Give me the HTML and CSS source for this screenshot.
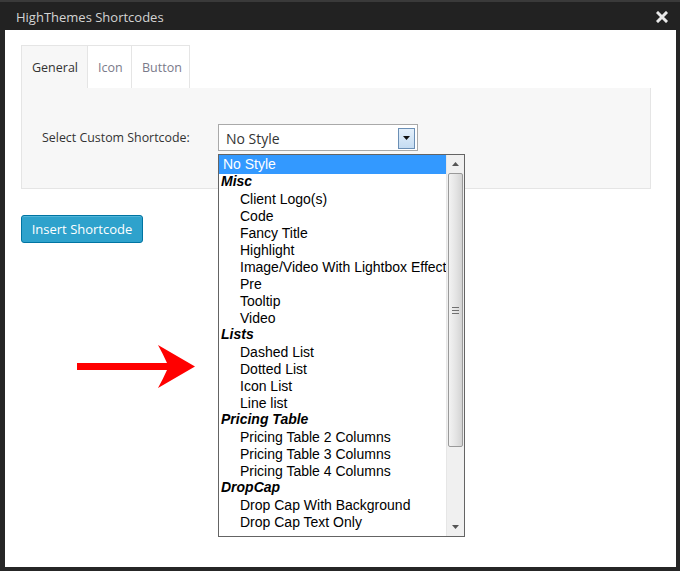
FILE: index.html
```html
<!DOCTYPE html>
<html>
<head>
<meta charset="utf-8">
<link rel="stylesheet" href="styles.css">
</head>
<body>
<div class="dialog">
  <div class="titlebar">
    <span class="title">HighThemes Shortcodes</span>
    <svg class="close" width="12" height="12" viewBox="0 0 12 12"><path d="M2 2 L10 10 M10 2 L2 10" stroke="#e8e8e8" stroke-width="3" stroke-linecap="square"/></svg>
  </div>
  <div class="content">
    <div class="tabs">
      <div class="tab active">General</div>
      <div class="tab tab-icon">Icon</div>
      <div class="tab tab-button">Button</div>
    </div>
    <div class="panel">
      <label class="label">Select Custom Shortcode:</label>
      <div class="select">
        <span class="select-text">No Style</span>
        <span class="select-btn"><svg width="7" height="4" viewBox="0 0 7 4"><path d="M0 0 H7 L3.5 4 Z" fill="#111"/></svg></span>
      </div>
    </div>
    <button class="insert">Insert Shortcode</button>
  </div>

  <div class="listbox">
    <div class="options">
      <div class="opt sel">No Style</div>
      <div class="grp">Misc</div>
      <div class="opt">Client Logo(s)</div>
      <div class="opt">Code</div>
      <div class="opt">Fancy Title</div>
      <div class="opt">Highlight</div>
      <div class="opt">Image/Video With Lightbox Effect</div>
      <div class="opt">Pre</div>
      <div class="opt">Tooltip</div>
      <div class="opt">Video</div>
      <div class="grp">Lists</div>
      <div class="opt">Dashed List</div>
      <div class="opt">Dotted List</div>
      <div class="opt">Icon List</div>
      <div class="opt">Line list</div>
      <div class="grp">Pricing Table</div>
      <div class="opt">Pricing Table 2 Columns</div>
      <div class="opt">Pricing Table 3 Columns</div>
      <div class="opt">Pricing Table 4 Columns</div>
      <div class="grp">DropCap</div>
      <div class="opt">Drop Cap With Background</div>
      <div class="opt">Drop Cap Text Only</div>
    </div>
    <div class="scrollbar">
      <div class="sb-arrow"><svg width="7" height="4" viewBox="0 0 7 4"><path d="M0 4 H7 L3.5 0 Z" fill="#555"/></svg></div>
      <div class="sb-thumb"><span class="grip"></span></div>
      <div class="sb-track"></div>
      <div class="sb-arrow"><svg width="7" height="4" viewBox="0 0 7 4"><path d="M0 0 H7 L3.5 4 Z" fill="#555"/></svg></div>
    </div>
  </div>

  <svg class="arrow" width="118" height="44" viewBox="0 0 118 44">
    <path d="M0 18 L90 18 Q86 9 81 0 L118 21.5 L81 43 Q86 34 90 25 L0 25 Z" fill="#ff0000"/>
  </svg>
</div>
</body>
</html>
```
FILE: styles.css
```css
html, body {
  margin: 0;
  padding: 0;
}
body {
  width: 680px;
  height: 571px;
  background: #262626;
  overflow: hidden;
}
.dialog {
  position: relative;
  width: 680px;
  height: 571px;
  border-top: 2px solid #3a3a3a;
  box-sizing: border-box;
}
.titlebar {
  height: 28px;
  background: #222;
  display: flex;
  align-items: center;
  justify-content: space-between;
  padding: 1px 12px 0 16px;
  box-sizing: border-box;
}
.title {
  font-family: "Open Sans", sans-serif;
  font-size: 13px;
  color: #d4d4d4;
}
.close {
  display: block;
}
.content {
  margin: 0 4px 0 5px;
  height: 537px;
  background: #fff;
  padding: 15px 25px 0 16px;
  box-sizing: border-box;
  font-family: "Open Sans", sans-serif;
}
.tabs {
  display: flex;
  height: 43px;
}
.tab {
  box-sizing: border-box;
  height: 43px;
  border: 1px solid #e5e5e5;
  border-left: none;
  border-bottom: none;
  background: #fff;
  font-size: 12.5px;
  color: #7a7a8a;
  display: flex;
  align-items: center;
  padding: 0 0 0 10px;
  white-space: nowrap;
}
.tab.active {
  background: #f7f7f7;
  border-left: 1px solid #e5e5e5;
  color: #333;
  width: 67px;
}
.tab-icon {
  width: 44px;
}
.tab-button {
  width: 58px;
}
.panel {
  height: 101px;
  box-sizing: border-box;
  background: #f7f7f7;
  border: 1px solid #e5e5e5;
  border-top: none;
  display: flex;
  align-items: flex-start;
  padding: 36px 0 0 20px;
}
.label {
  font-size: 12.4px;
  color: #333;
  width: 176px;
  line-height: 27px;
}
.select {
  width: 200px;
  height: 27px;
  box-sizing: border-box;
  background: #fff;
  border: 1px solid #a9a9a9;
  display: flex;
  align-items: center;
  justify-content: space-between;
  padding: 1px 2px 0 7px;
}
.select-text {
  font-size: 14px;
  color: #333;
}
.select-btn {
  width: 17px;
  height: 21px;
  box-sizing: border-box;
  border: 1px solid #6b8fb5;
  background: linear-gradient(#e4f0fb, #c5dcf2);
  display: flex;
  align-items: center;
  justify-content: center;
}
.insert {
  margin-top: 26px;
  width: 122px;
  height: 28px;
  background: #2ea2cc;
  border: 1px solid #0074a2;
  border-radius: 3px;
  color: #fff;
  font-family: "Open Sans", sans-serif;
  font-size: 13px;
  padding: 0;
  box-shadow: inset 0 1px 0 rgba(120, 200, 230, 0.5);
}
.listbox {
  position: absolute;
  left: 218px;
  top: 152px;
  width: 247px;
  height: 383px;
  box-sizing: border-box;
  border: 1px solid #646464;
  background: #fff;
  display: flex;
  overflow: hidden;
}
.options {
  flex: 1;
  padding-top: 0;
  font-family: "Liberation Sans", Arial, sans-serif;
  font-size: 14px;
  color: #000;
  white-space: nowrap;
  overflow: hidden;
}
.opt, .grp {
  height: 17px;
  line-height: 17px;
}
.grp {
  line-height: 15px;
}
.opt {
  padding-left: 21px;
}
.opt.sel {
  height: 19px;
  line-height: 18px;
  padding-left: 4px;
  background: #3399ff;
  color: #fff;
}
.grp {
  padding-left: 2px;
  font-weight: bold;
  font-style: italic;
}
.scrollbar {
  width: 17px;
  background: #f0f0f0;
  border-left: 1px solid #e6e6e6;
  display: flex;
  flex-direction: column;
}
.sb-arrow {
  height: 18px;
  display: flex;
  align-items: center;
  justify-content: center;
}
.sb-thumb {
  height: 274px;
  margin: 0 1px;
  box-sizing: border-box;
  border: 1px solid #9a9a9a;
  border-radius: 2px;
  background: linear-gradient(to right, #f3f3f3, #e2e2e2 60%, #d3d3d3);
  display: flex;
  align-items: center;
  justify-content: center;
}
.grip {
  width: 7px;
  height: 7px;
  background: repeating-linear-gradient(#707070 0 1px, transparent 1px 3px);
}
.sb-track {
  flex: 1;
}
.arrow {
  position: absolute;
  left: 77px;
  top: 343px;
}
```
